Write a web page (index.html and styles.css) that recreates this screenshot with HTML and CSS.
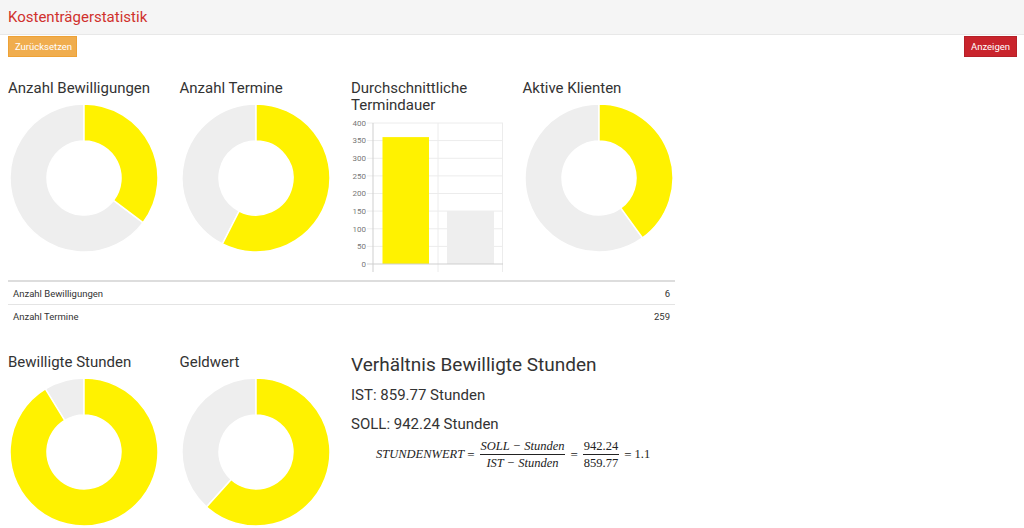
FILE: index.html
```html
<!DOCTYPE html>
<html lang="de">
<head>
<meta charset="utf-8">
<title>Kostenträgerstatistik</title>
<link rel="stylesheet" href="styles.css">
</head>
<body>
<header class="topbar">
  <h1 class="page-title">Kostenträgerstatistik</h1>
</header>
<div class="actions">
  <button class="btn btn-warning">Zurücksetzen</button>
  <button class="btn btn-danger">Anzeigen</button>
</div>

<section class="block block-top">
  <div class="chart-row">
    <div class="card">
      <h2 class="card-title">Anzahl Bewilligungen</h2>
      <svg class="donut" width="150" height="150" viewBox="0 0 150 150">
        <path class="seg-gray" d="M134.05,119.59 A74,74 0 1 1 75,1 L75,38 A37,37 0 1 0 104.53,97.30 Z"/>
        <path class="seg-yellow" d="M75,1 A74,74 0 0 1 134.05,119.59 L104.53,97.30 A37,37 0 0 0 75,38 Z"/>
      </svg>
    </div>
    <div class="card">
      <h2 class="card-title">Anzahl Termine</h2>
      <svg class="donut" width="150" height="150" viewBox="0 0 150 150">
        <path class="seg-gray" d="M41.40,140.93 A74,74 0 0 1 75,1 L75,38 A37,37 0 0 0 58.20,107.97 Z"/>
        <path class="seg-yellow" d="M75,1 A74,74 0 1 1 41.40,140.93 L58.20,107.97 A37,37 0 1 0 75,38 Z"/>
      </svg>
    </div>
    <div class="card">
      <h2 class="card-title card-title-narrow">Durchschnittliche Termindauer</h2>
      <svg class="bars" width="152" height="159" viewBox="0 0 152 159">
        <g class="grid">
          <line x1="16" y1="8" x2="152" y2="8"/>
          <line x1="16" y1="25.6" x2="152" y2="25.6"/>
          <line x1="16" y1="43.25" x2="152" y2="43.25"/>
          <line x1="16" y1="60.9" x2="152" y2="60.9"/>
          <line x1="16" y1="78.5" x2="152" y2="78.5"/>
          <line x1="16" y1="96.1" x2="152" y2="96.1"/>
          <line x1="16" y1="113.75" x2="152" y2="113.75"/>
          <line x1="16" y1="131.4" x2="152" y2="131.4"/>
          <line x1="87" y1="8" x2="87" y2="157"/>
          <line x1="151.5" y1="8" x2="151.5" y2="157"/>
        </g>
        <rect class="bar-yellow" x="31.5" y="22.1" width="46.5" height="126.9"/>
        <rect class="bar-gray" x="96" y="96.1" width="47" height="52.9"/>
        <g class="axis">
          <line x1="22" y1="8" x2="22" y2="157"/>
          <line x1="16" y1="149" x2="152" y2="149"/>
        </g>
        <g class="ticks">
          <text x="15" y="10.8">400</text>
          <text x="15" y="28.4">350</text>
          <text x="15" y="46">300</text>
          <text x="15" y="63.7">250</text>
          <text x="15" y="81.3">200</text>
          <text x="15" y="98.9">150</text>
          <text x="15" y="116.5">100</text>
          <text x="15" y="134.2">50</text>
          <text x="15" y="151.8">0</text>
        </g>
      </svg>
    </div>
    <div class="card">
      <h2 class="card-title">Aktive Klienten</h2>
      <svg class="donut" width="150" height="150" viewBox="0 0 150 150">
        <path class="seg-gray" d="M118.50,134.87 A74,74 0 1 1 75,1 L75,38 A37,37 0 1 0 96.75,104.93 Z"/>
        <path class="seg-yellow" d="M75,1 A74,74 0 0 1 118.50,134.87 L96.75,104.93 A37,37 0 0 0 75,38 Z"/>
      </svg>
    </div>
  </div>

  <table class="summary">
    <tbody>
      <tr><td>Anzahl Bewilligungen</td><td class="num">6</td></tr>
      <tr><td>Anzahl Termine</td><td class="num">259</td></tr>
    </tbody>
  </table>
</section>

<section class="block block-bottom">
  <div class="card">
    <h2 class="card-title">Bewilligte Stunden</h2>
    <svg class="donut" width="150" height="150" viewBox="0 0 150 150">
      <path class="seg-gray" d="M36.34,11.91 A74,74 0 0 1 75,1 L75,38 A37,37 0 0 0 55.67,43.45 Z"/>
      <path class="seg-yellow" d="M75,1 A74,74 0 1 1 36.34,11.91 L55.67,43.45 A37,37 0 1 0 75,38 Z"/>
    </svg>
  </div>
  <div class="card">
    <h2 class="card-title">Geldwert</h2>
    <svg class="donut" width="150" height="150" viewBox="0 0 150 150">
      <path class="seg-gray" d="M25.48,129.99 A74,74 0 0 1 75,1 L75,38 A37,37 0 0 0 50.24,102.49 Z"/>
      <path class="seg-yellow" d="M75,1 A74,74 0 1 1 25.48,129.99 L50.24,102.49 A37,37 0 1 0 75,38 Z"/>
    </svg>
  </div>
  <div class="ratio">
    <h3 class="ratio-title">Verhältnis Bewilligte Stunden</h3>
    <p class="ratio-line">IST: 859.77 Stunden</p>
    <p class="ratio-line">SOLL: 942.24 Stunden</p>
    <div class="formula">
      <span class="mi">STUNDENWERT</span>
      <span class="mo">=</span>
      <span class="frac">
        <span class="num-part mi">SOLL − Stunden</span>
        <span class="den-part mi">IST − Stunden</span>
      </span>
      <span class="mo">=</span>
      <span class="frac">
        <span class="num-part mn">942.24</span>
        <span class="den-part mn">859.77</span>
      </span>
      <span class="mo">=</span>
      <span class="mn">1.1</span>
    </div>
  </div>
</section>
</body>
</html>
```
FILE: styles.css
```css
html, body {
  margin: 0;
  padding: 0;
  background: #ffffff;
}

body {
  font-family: Roboto, "Liberation Sans", sans-serif;
  color: #333333;
  width: 1024px;
  height: 528px;
  overflow: hidden;
}

.topbar {
  height: 35px;
  background: #f5f5f5;
  border-bottom: 1px solid #e8e8e8;
  box-sizing: border-box;
  display: flex;
  align-items: center;
  padding: 0 8px;
}

.page-title {
  margin: 0;
  font-size: 15px;
  font-weight: 400;
  color: #d0312d;
  line-height: 20px;
}

.actions {
  display: flex;
  justify-content: space-between;
  padding: 1px 7px 0 8px;
}

.btn {
  font-family: Roboto, "Liberation Sans", sans-serif;
  font-size: 9.5px;
  color: #ffffff;
  border: 1px solid transparent;
  border-radius: 0;
  height: 21px;
  padding: 0 6px;
  line-height: 19px;
  cursor: pointer;
}

.btn-warning {
  background: #f0ad4e;
  border-color: #eea236;
  width: 69px;
}

.btn-danger {
  background: #c9242c;
  border-color: #b52028;
  width: 53px;
}

.block {
  padding-left: 8px;
}

.block-top {
  margin-top: 23px;
}

.chart-row {
  display: grid;
  grid-template-columns: 171.5px 171.5px 171.5px 171.5px;
  align-items: start;
}

.card {
  display: flex;
  flex-direction: column;
}

.card-title {
  margin: 0 0 6px 0;
  font-size: 15px;
  font-weight: 400;
  line-height: 17px;
  color: #333333;
  white-space: nowrap;
}

.card-title-narrow {
  white-space: normal;
  width: 150px;
  margin-bottom: 0;
  line-height: 17px;
}

.donut {
  display: block;
  margin-left: 1px;
}

.seg-yellow {
  fill: #fff200;
  stroke: #ffffff;
  stroke-width: 1.5;
}

.seg-gray {
  fill: #eeeeee;
  stroke: #ffffff;
  stroke-width: 1.5;
}

.bars {
  display: block;
  margin-top: 1px;
}

.grid line {
  stroke: #ececec;
  stroke-width: 1;
}

.axis line {
  stroke: #cfcfcf;
  stroke-width: 1;
}

.bar-yellow {
  fill: #fff200;
}

.bar-gray {
  fill: #eeeeee;
}

.ticks text {
  font-family: Roboto, "Liberation Sans", sans-serif;
  font-size: 8px;
  fill: #777777;
  text-anchor: end;
}

.summary {
  width: 667px;
  margin-top: 6px;
  border-collapse: collapse;
  border-top: 2px solid #dddddd;
  font-size: 9.5px;
  color: #333333;
}

.summary td {
  height: 22px;
  padding: 0 5px;
  border-top: 1px solid #e4e4e4;
  vertical-align: middle;
}

.summary tr:first-child td {
  border-top: none;
}

.summary td.num {
  text-align: right;
}

.block-bottom {
  margin-top: 27px;
  display: grid;
  grid-template-columns: 171.5px 171.5px auto;
  align-items: start;
}

.ratio {
  display: flex;
  flex-direction: column;
}

.ratio-title {
  margin: 0;
  font-size: 19px;
  font-weight: 400;
  line-height: 22px;
  color: #333333;
}

.ratio-line {
  margin: 9px 0 0 0;
  font-size: 15px;
  line-height: 20px;
  color: #333333;
}

.formula {
  margin-top: 5px;
  padding-left: 25px;
  display: flex;
  align-items: center;
  gap: 3px;
  font-family: "Liberation Serif", "DejaVu Serif", serif;
  font-size: 12.5px;
  color: #222222;
}

.mi {
  font-style: italic;
}

.mn {
  font-style: normal;
}

.mo {
  font-style: normal;
  font-size: 13px;
}

.frac {
  display: inline-flex;
  flex-direction: column;
  align-items: center;
  padding: 0 2px;
}

.num-part {
  padding: 0 1px 1px;
  border-bottom: 1px solid #222222;
  line-height: 14px;
}

.den-part {
  padding: 1px 1px 0;
  line-height: 14px;
}
```
